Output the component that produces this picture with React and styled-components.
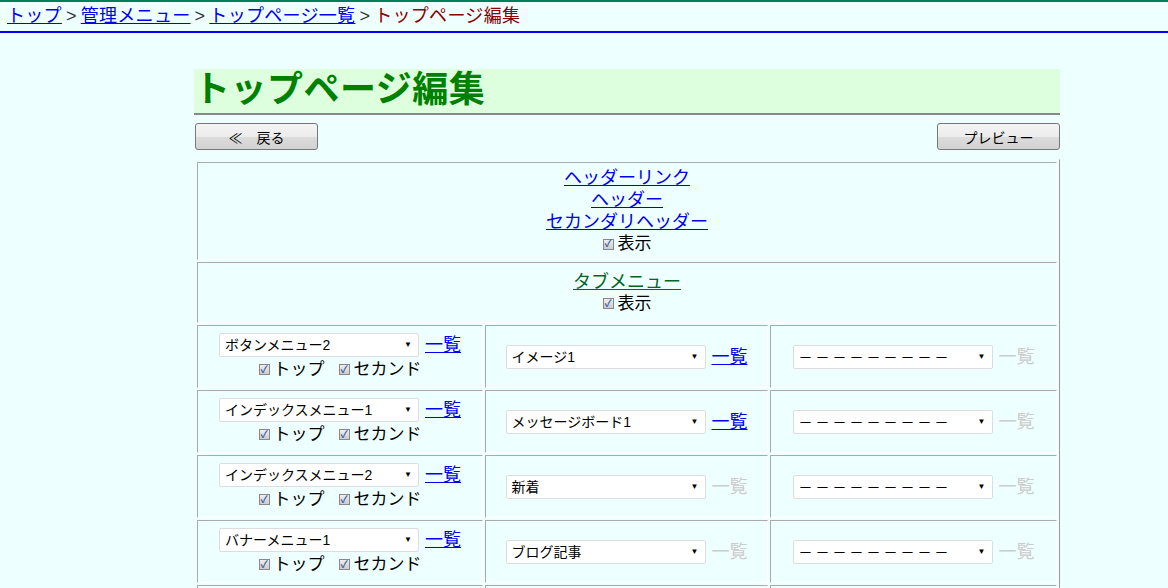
import React from "react";
import styled, { createGlobalStyle } from "styled-components";

const G = createGlobalStyle`
  html, body { margin: 0; background: #eeffff; }
  body { font-family: "Liberation Sans", "Noto Sans CJK JP", sans-serif; color: #000; }
`;

const TopBar = styled.div`
  border-top: 2px solid #00805a;
  border-bottom: 2px solid #0000ee;
  height: 29px;
  padding-left: 7px;
  font-size: 18px;
  line-height: 29px;
  white-space: nowrap;
  letter-spacing: 0.3px;
`;
const Crumb = styled.a`
  color: #0000ee;
  text-decoration: underline;
`;
const Sep = styled.span` color: #333; margin: 0 4px; `;
const Current = styled.span` color: #880000; `;

const Main = styled.div`
  width: 866px;
  margin: 36px 0 0 194px;
`;
const Title = styled.h1`
  margin: 0;
  height: 44px;
  background: #ddffdd;
  border-bottom: 2px solid #888;
  color: #008000;
  font-size: 36px;
  font-weight: bold;
  line-height: 42px;
  letter-spacing: 0.5px;
`;
const BtnRow = styled.div`
  display: flex;
  justify-content: space-between;
  margin-top: 8px;
  padding-left: 1px;
`;
const Btn = styled.div`
  width: ${p => p.w}px;
  height: 27px;
  box-sizing: border-box;
  border: 1px solid #777;
  border-radius: 3px;
  background: linear-gradient(#f4f4f4 0%, #ececec 50%, #dcdcdc 51%, #d2d2d2 100%);
  font-size: 14px;
  display: flex;
  align-items: center;
  justify-content: center;
  gap: 14px;
`;
const Table = styled.table`
  margin: 9px 0 0 0;
  width: 866px;
  border-collapse: separate;
  border-spacing: 2px;
  border: 1px solid;
  border-color: #eeffff #999 #999 #eeffff;
`;
const Td = styled.td`
  border: 1px solid;
  border-color: #aaa #fff #fff #aaa;
  text-align: center;
  vertical-align: middle;
  padding: ${p => p.pad || "0"};
  height: ${p => p.h}px;
  width: ${p => p.w || "auto"};
`;
const BigLink = styled.a`
  display: inline-block;
  font-size: 18px;
  line-height: 22px;
  color: ${p => p.green ? "#006622" : "#0000ee"};
  text-decoration: underline;
`;
const Line = styled.div`
  display: flex;
  justify-content: center;
  align-items: center;
  gap: ${p => p.gap || 0}px;
  font-size: 18px;
  line-height: 22px;
  margin-top: ${p => p.mt || 0}px;
`;
const Box = styled.span`
  width: 11px;
  height: 11px;
  box-sizing: border-box;
  border: 1px solid #888;
  background: linear-gradient(#eee, #ccc);
  display: inline-flex;
  align-items: center;
  justify-content: center;
  color: #3b5ea8;
  font-size: 10px;
  font-weight: bold;
  margin-right: 4px;
  line-height: 1;
`;
const Check = ({ label }) => (
  <CheckWrap><Box>✓</Box>{label}</CheckWrap>
);
const CheckWrap = styled.span`
  display: inline-flex;
  align-items: center;
  font-size: 17px;
`;
const Sel = styled.div`
  width: 200px;
  height: 24px;
  box-sizing: border-box;
  background: #fff;
  border: 1px solid #ddd;
  border-radius: 2px;
  display: flex;
  align-items: center;
  justify-content: space-between;
  padding: 0 6px 0 5px;
  font-size: 14px;
  text-align: left;
  letter-spacing: ${p => p.dash ? "3px" : "0"};
  &::after { content: "▼"; font-size: 8px; letter-spacing: 0; }
`;
const ListLink = styled.span`
  font-size: 18px;
  margin-left: 6px;
  color: ${p => p.off ? "#cccccc" : "#0000ee"};
  text-decoration: ${p => p.off ? "none" : "underline"};
`;

const rows = [
  ["ボタンメニュー2", "イメージ1", true],
  ["インデックスメニュー1", "メッセージボード1", true],
  ["インデックスメニュー2", "新着", false],
  ["バナーメニュー1", "ブログ記事", false],
  ["バナーメニュー2", "ブログ記事", false],
];
const DASH = "－－－－－－－－－";

export default function App() {
  return (
    <>
      <G />
      <TopBar>
        <Crumb>トップ</Crumb><Sep>&gt;</Sep>
        <Crumb>管理メニュー</Crumb><Sep>&gt;</Sep>
        <Crumb>トップページ一覧</Crumb><Sep>&gt;</Sep>
        <Current>トップページ編集</Current>
      </TopBar>
      <Main>
        <Title>トップページ編集</Title>
        <BtnRow>
          <Btn w={123}><span>≪</span><span>戻る</span></Btn>
          <Btn w={123}>プレビュー</Btn>
        </BtnRow>
        <Table>
          <tbody>
            <tr>
              <Td colSpan={3} h={92} pad="2px 0">
                <BigLink>ヘッダーリンク</BigLink><br />
                <BigLink>ヘッダー</BigLink><br />
                <BigLink>セカンダリヘッダー</BigLink>
                <Line><Check label="表示" /></Line>
              </Td>
            </tr>
            <tr>
              <Td colSpan={3} h={59}>
                <BigLink green>タブメニュー</BigLink>
                <Line><Check label="表示" /></Line>
              </Td>
            </tr>
            {rows.map(([a, b, on], i) => (
              <tr key={i}>
                <Td h={61} w="284px">
                  <Line><Sel>{a}</Sel><ListLink>一覧</ListLink></Line>
                  <Line gap={14} mt={2}><Check label="トップ" /><Check label="セカンド" /></Line>
                </Td>
                <Td w="281px">
                  <Line><Sel>{b}</Sel><ListLink off={!on}>一覧</ListLink></Line>
                </Td>
                <Td>
                  <Line><Sel dash>{DASH}</Sel><ListLink off>一覧</ListLink></Line>
                </Td>
              </tr>
            ))}
          </tbody>
        </Table>
      </Main>
    </>
  );
}
